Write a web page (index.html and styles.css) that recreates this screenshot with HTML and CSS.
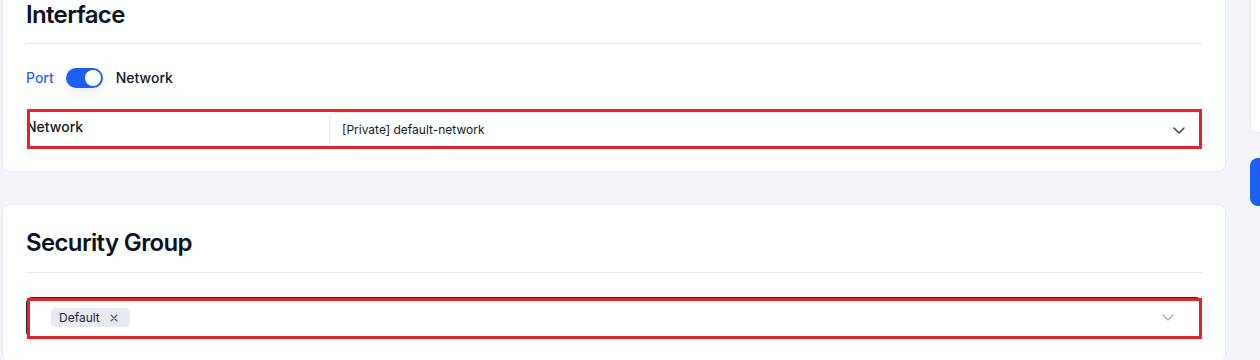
FILE: index.html
```html
<!DOCTYPE html>
<html lang="en">
<head>
<meta charset="utf-8">
<title>Interface</title>
<link rel="stylesheet" href="styles.css">
</head>
<body>
<div class="page">
  <main class="main">
    <section class="card card-first">
      <h2 class="card-title">Interface</h2>
      <div class="switch-row">
        <span class="switch-label active">Port</span>
        <span class="toggle"><span class="knob"></span></span>
        <span class="switch-label">Network</span>
      </div>
      <div class="form-row annot">
        <label class="form-label">Network</label>
        <div class="select">
          <span class="select-value">[Private] default-network</span>
          <svg class="chev" width="12" height="7" viewBox="0 0 12 7"><path d="M1 1l5 5 5-5" fill="none" stroke="#374151" stroke-width="1.5" stroke-linecap="round" stroke-linejoin="round"/></svg>
        </div>
      </div>
    </section>
    <section class="card">
      <h2 class="card-title">Security Group</h2>
      <div class="multi annot">
        <span class="tag">Default<svg class="tag-x" width="8" height="8" viewBox="0 0 8 8"><path d="M1 1l6 6M7 1l-6 6" stroke="#4b5563" stroke-width="1.1" stroke-linecap="round"/></svg></span>
        <svg class="chev2" width="12" height="7" viewBox="0 0 12 7"><path d="M1 1l5 5 5-5" fill="none" stroke="#9ca3af" stroke-width="1.2" stroke-linecap="round" stroke-linejoin="round"/></svg>
      </div>
    </section>
  </main>
  <aside class="side">
    <div class="side-card"></div>
    <button class="side-btn" type="button"></button>
  </aside>
</div>
</body>
</html>
```

FILE: styles.css
```css
* { box-sizing: border-box; }
html, body { margin: 0; padding: 0; }
body {
  background: #f1f4f9;
  font-family: Inter, "Noto Sans", sans-serif;
  color: #111827;
  overflow: hidden;
  width: 1260px;
  height: 360px;
}
.page {
  display: flex;
  gap: 24px;
  padding-left: 2px;
  margin-top: -25px;
  width: 1260px;
  overflow: hidden;
}
.main {
  width: 1224px;
  flex: none;
  display: flex;
  flex-direction: column;
  gap: 32px;
}
.card {
  background: #fff;
  border: 1px solid #e8ecf2;
  border-radius: 8px;
  padding: 23px 23px 23px;
}
.card-title {
  margin: 0;
  font-size: 24px;
  line-height: 30px;
  font-weight: 600;
  letter-spacing: -0.65px;
  color: #0b1220;
  padding-bottom: 14px;
  border-bottom: 1px solid #e5e7eb;
}
.card-first .card-title { line-height: 32px; padding-bottom: 12px; }
.switch-row {
  margin-top: 24px;
  display: flex;
  align-items: center;
  gap: 12px;
  height: 20px;
}
.switch-label {
  font-size: 14px;
  line-height: 20px;
  font-weight: 500;
  color: #111827;
}
.switch-label.active { color: #2563f0; }
.toggle {
  width: 37px;
  height: 20px;
  border-radius: 10px;
  background: #1f5ef3;
  display: flex;
  align-items: center;
  justify-content: flex-end;
  padding: 2px;
  box-shadow: 0 6px 12px rgba(30, 40, 60, 0.08);
  margin-right: 1px;
}
.knob {
  width: 16px;
  height: 16px;
  border-radius: 50%;
  background: #fff;
}
.annot { position: relative; }
.annot::after {
  content: "";
  position: absolute;
  top: -1px;
  right: 0;
  bottom: -1px;
  left: 1px;
  border: 3px solid #e3242b;
  pointer-events: none;
}
.form-row {
  margin-top: 22px;
  display: grid;
  grid-template-columns: 303px 1fr;
  height: 38px;
}
.form-label {
  font-size: 14px;
  line-height: 20px;
  font-weight: 500;
  color: #111827;
  padding-top: 7px;
}
.select {
  margin-top: 2px;
  height: 36px;
  border: 1px solid #e5e7eb;
  border-radius: 6px;
  background: #fff;
  display: flex;
  align-items: center;
  justify-content: space-between;
  padding: 0 16px 0 12px;
}
.select-value {
  font-size: 12px;
  line-height: 18px;
  color: #111827;
}
.multi {
  margin-top: 24px;
  height: 41px;
  border: 1px solid #1f2937;
  border-radius: 6px;
  display: flex;
  align-items: center;
  justify-content: space-between;
  padding: 0 27px 0 24px;
}
.multi::after {
  top: 0;
  right: -1px;
  bottom: -2px;
  left: 0;
}
.tag {
  display: inline-flex;
  align-items: center;
  gap: 10px;
  height: 19px;
  padding: 0 12px 0 8px;
  background: #e7eaf0;
  border-radius: 5px;
  font-size: 12px;
  line-height: 16px;
  color: #1f2937;
}
.tag-x { display: block; }
.chev, .chev2 { display: block; }
.side {
  width: 300px;
  flex: none;
  display: flex;
  flex-direction: column;
  gap: 25px;
}
.side-card {
  height: 158px;
  background: #fff;
  border: 1px solid #e8ecf2;
  border-radius: 8px;
}
.side-btn {
  height: 48px;
  border: 0;
  border-radius: 8px;
  background: #1f5ef5;
}
```
